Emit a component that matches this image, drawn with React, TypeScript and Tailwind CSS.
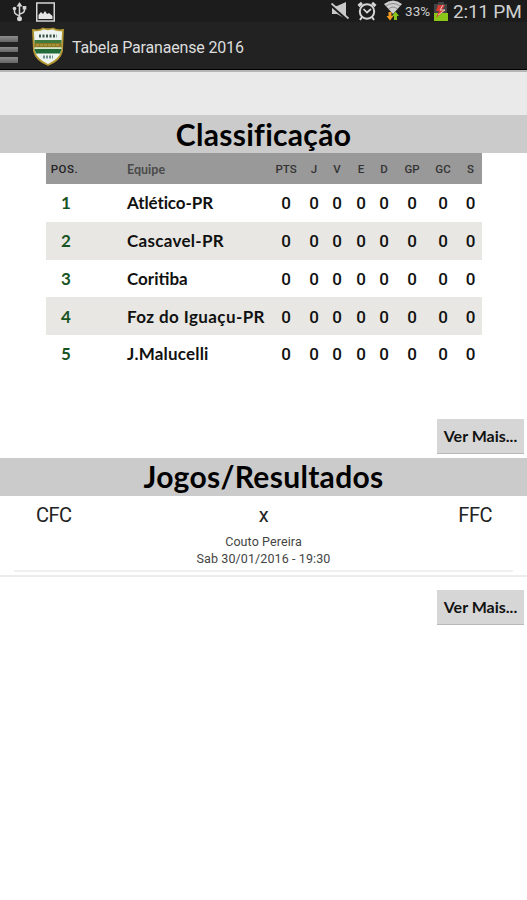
import React from "react";

const teams = [
  { pos: 1, name: "Atlético-PR", nameClass: "tracking-[-0.1px]" },
  { pos: 2, name: "Cascavel-PR", nameClass: "tracking-[0.3px]" },
  { pos: 3, name: "Coritiba", nameClass: "tracking-[0px]" },
  { pos: 4, name: "Foz do Iguaçu-PR", nameClass: "tracking-[0.4px]" },
  { pos: 5, name: "J.Malucelli", nameClass: "tracking-[0.2px]" },
];

const stats = ["PTS", "J", "V", "E", "D", "GP", "GC", "S"];

const columns =
  "grid grid-cols-[40px_41px_142px_34px_22px_24px_24px_22px_34px_28px_25px] items-center w-[436px] ml-[46px]";

const Crest = () => (
  <svg width="34" height="40" viewBox="0 0 34 40">
    <path
      d="M2 3Q9 4 12 1.500Q17 3 22 1.500Q26 4 32 3L31 24Q29 33 17 38Q5 33 3 24Z"
      fill="#eef5f1"
      stroke="#b39832"
      strokeWidth="1.800"
    />
    <path d="M3.500 13H30.500V16H3.500Z" fill="#3f7a3c" />
    <path d="M3.300 16H30.700V20.500H3.300Z" fill="#8a7a28" />
    <path d="M3.500 20.500H30.500V22H3.500Z" fill="#d8e4c4" />
    <path d="M3.500 22H30.500L29 26.500H5Z" fill="#216b38" />
    <path d="M8 9H26" stroke="#3b544a" strokeWidth="3" strokeDasharray="2 1.500" />
    <path d="M5 18H29" stroke="#b59b3c" strokeWidth="1.500" strokeDasharray="3 1" />
    <path d="M12 30H22" stroke="#6d918d" strokeWidth="3" strokeDasharray="2 1" />
  </svg>
);

const StatusBar = () => (
  <div className="flex h-[22px] items-start bg-[#1c1c1c] text-[#cfcfcf]">
    <svg className="ml-3 mt-[2px]" width="15" height="20" viewBox="0 0 15 20" fill="none" stroke="#d5d5d5" strokeWidth="1.500">
      <path d="M7.500 3V17M2.500 7V10Q2.500 12 7.500 14M12.500 6V8Q12.500 11 7.500 12" />
      <path d="M7.500 0L10.500 4.500H4.500Z" fill="#d5d5d5" stroke="none" />
      <circle cx="2.500" cy="6.500" r="1.800" fill="#d5d5d5" stroke="none" />
      <path d="M10.700 4H14.300V7.500H10.700Z" fill="#d5d5d5" stroke="none" />
      <circle cx="7.500" cy="16.800" r="2.500" fill="#d5d5d5" stroke="none" />
    </svg>
    <svg className="ml-2 mt-[2px]" width="21" height="20" viewBox="0 0 21 20">
      <rect x="1.750" y="1" width="17.500" height="18" fill="none" stroke="#d5d5d5" strokeWidth="1.500" />
      <path d="M3.500 17V13L6 10L8 12L10 9L12 12L14 11L17.500 14V17Z" fill="#e6e6e6" />
    </svg>

    <div className="ml-auto flex items-start">
      {/* sound off */}
      <svg className="mt-px" width="20" height="20" viewBox="0 0 20 20">
        <path d="M2 5H7L16 1V18L7 13H2Z" fill="#c9c9c9" />
        <path d="M1 4L18 19" stroke="#1c1c1c" strokeWidth="3" />
        <path d="M1.500 2.500L18.500 17.500" stroke="#c9c9c9" strokeWidth="1.700" />
      </svg>
      {/* alarm */}
      <svg className="ml-[7px] mt-px" width="20" height="20" viewBox="0 0 20 20" fill="none" stroke="#d5d5d5">
        <circle cx="10" cy="10.500" r="7.200" strokeWidth="2" />
        <path d="M6.500 8L10 11.500L14 8" strokeWidth="1.700" />
        <path d="M1.500 5L5 2M18.500 5L15 2" strokeWidth="3" />
        <path d="M5 16L3 19M15 16L17 19" strokeWidth="2" />
      </svg>
      {/* wifi with traffic arrows */}
      <svg className="ml-[6px]" width="20" height="21" viewBox="0 0 20 21">
        <path d="M1 4Q10 -3 19 4L10 14Z" fill="#cfcfcf" />
        <path d="M3 6Q10 1 17 6M5.500 9Q10 5 14.500 9" fill="none" stroke="#777" strokeWidth="0.800" />
        <path d="M5.500 12H8.500V16H10.500L7 20.500L3.500 16H5.500Z" fill="#f29b20" />
        <path d="M11 20V16H9L12.500 11.500L16 16H14V20Z" fill="#87c51c" />
      </svg>
      <span className="ml-[2px] mt-[3px] w-[27px] whitespace-nowrap text-[13.500px] leading-4 tracking-[0.1px]">33%</span>
      {/* battery */}
      <svg className="ml-[2px] mt-px" width="14" height="20" viewBox="0 0 14 20">
        <path d="M4 1H10V3H13V20H0V3H4Z" fill="#444" />
        <path d="M0 12H14V20H0Z" fill="#8ac718" />
        <path d="M4 4H11L8 9H11L2 17L5 10H2Z" fill="#d93b35" />
        <path d="M9 4L6 9H11L4 14" fill="none" stroke="#ecc7c0" strokeWidth="1" />
      </svg>
      <span className="ml-[5px] w-[74px] whitespace-nowrap text-[19px] leading-[23px] tracking-[-0.2px]">2:11 PM</span>
    </div>
  </div>
);

const ActionBar = () => (
  <div className="flex h-12 items-start border-b border-black bg-[#222222]">
    <div className="mt-[14px] flex w-[18px] flex-col gap-[5px]">
      <div className="h-[5.500px] bg-linear-to-b from-[#8c8c8c] to-[#666666]" />
      <div className="h-[5.500px] bg-linear-to-b from-[#8c8c8c] to-[#666666]" />
      <div className="h-[5.500px] bg-linear-to-b from-[#8c8c8c] to-[#666666]" />
    </div>
    <div className="ml-[13px] mt-[5px]">
      <Crest />
    </div>
    <h1 className="ml-[7px] mt-[14px] whitespace-nowrap text-[16px] leading-6 tracking-[-0.17px] text-[#dddddd]">
      Tabela Paranaense 2016
    </h1>
  </div>
);

const SectionTitle = ({ children }: { children: React.ReactNode }) => (
  <h2 className="flex h-[38px] items-center justify-center bg-[#cbcbcb] font-[Lato,sans-serif] text-[30px] font-bold tracking-[0.3px] text-black">
    {children}
  </h2>
);

const MoreButton = () => (
  <button className="mr-[3px] flex h-[35px] w-[87px] items-center justify-center whitespace-nowrap border-b border-[#b8b8b8] bg-[#d6d6d6] font-[Lato,sans-serif] text-[16px] font-bold text-[#111111]">
    Ver Mais...
  </button>
);

const Standings = () => (
  <div>
    <div className={`${columns} h-[31px] bg-[#999999] pt-[3px] text-center text-[11.500px] font-medium text-[#333333]`}>
      <span className="-ml-[3px] tracking-[0.5px] text-[#222222]">POS.</span>
      <span />
      <span className="text-left font-[Lato,sans-serif] text-[12.500px] font-bold text-[#4a4a4a]">Equipe</span>
      {stats.map((label) => (
        <span key={label} className="last:pl-[2px]">{label}</span>
      ))}
    </div>
    {teams.map((team, i) => (
      <div
        key={team.pos}
        className={`${columns} h-[37.800px] font-[Lato,sans-serif] text-[17px] font-bold text-[#111111] ${
          i % 2 ? "bg-[#e8e7e3]" : "bg-white"
        }`}
      >
        <span className="text-center text-[#17541f]">{team.pos}</span>
        <span />
        <span className={`whitespace-nowrap ${team.nameClass}`}>{team.name}</span>
        {stats.map((label) => (
          <span key={label} className="pt-[2px] text-center font-[Roboto,sans-serif] font-medium last:pl-[2px]">
            0
          </span>
        ))}
      </div>
    ))}
  </div>
);

const Match = () => (
  <div className="h-[81px] border-b-2 border-[#ececec] pt-[7px]">
    <div className="grid grid-cols-3 text-[20px] leading-6 tracking-[-0.5px] text-[#222222]">
      <span className="pl-[36px]">CFC</span>
      <span className="text-center">x</span>
      <span className="pr-[35px] text-right">FFC</span>
    </div>
    <div className="mx-[14px] mt-[6px] h-[39px] border-b-2 border-[#f0f0f0] text-center text-[12.500px] leading-[17px] tracking-[0.1px] text-[#444444]">
      <p>Couto Pereira</p>
      <p>Sab 30/01/2016 - 19:30</p>
    </div>
  </div>
);

const App = () => {
  return (
    <div className="h-[900px] w-[527px] overflow-hidden bg-white font-[Roboto,sans-serif]">
      <StatusBar />
      <ActionBar />
      <div className="h-[45px] border-t-2 border-[#b5b5b5] bg-[#eaeaea]" />
      <SectionTitle>Classificação</SectionTitle>
      <Standings />
      <div className="mt-[46px] flex justify-end">
        <MoreButton />
      </div>
      <div className="mt-[4px]">
        <SectionTitle>Jogos/Resultados</SectionTitle>
      </div>
      <Match />
      <div className="mt-[13px] flex justify-end">
        <MoreButton />
      </div>
    </div>
  );
};

export default App;
